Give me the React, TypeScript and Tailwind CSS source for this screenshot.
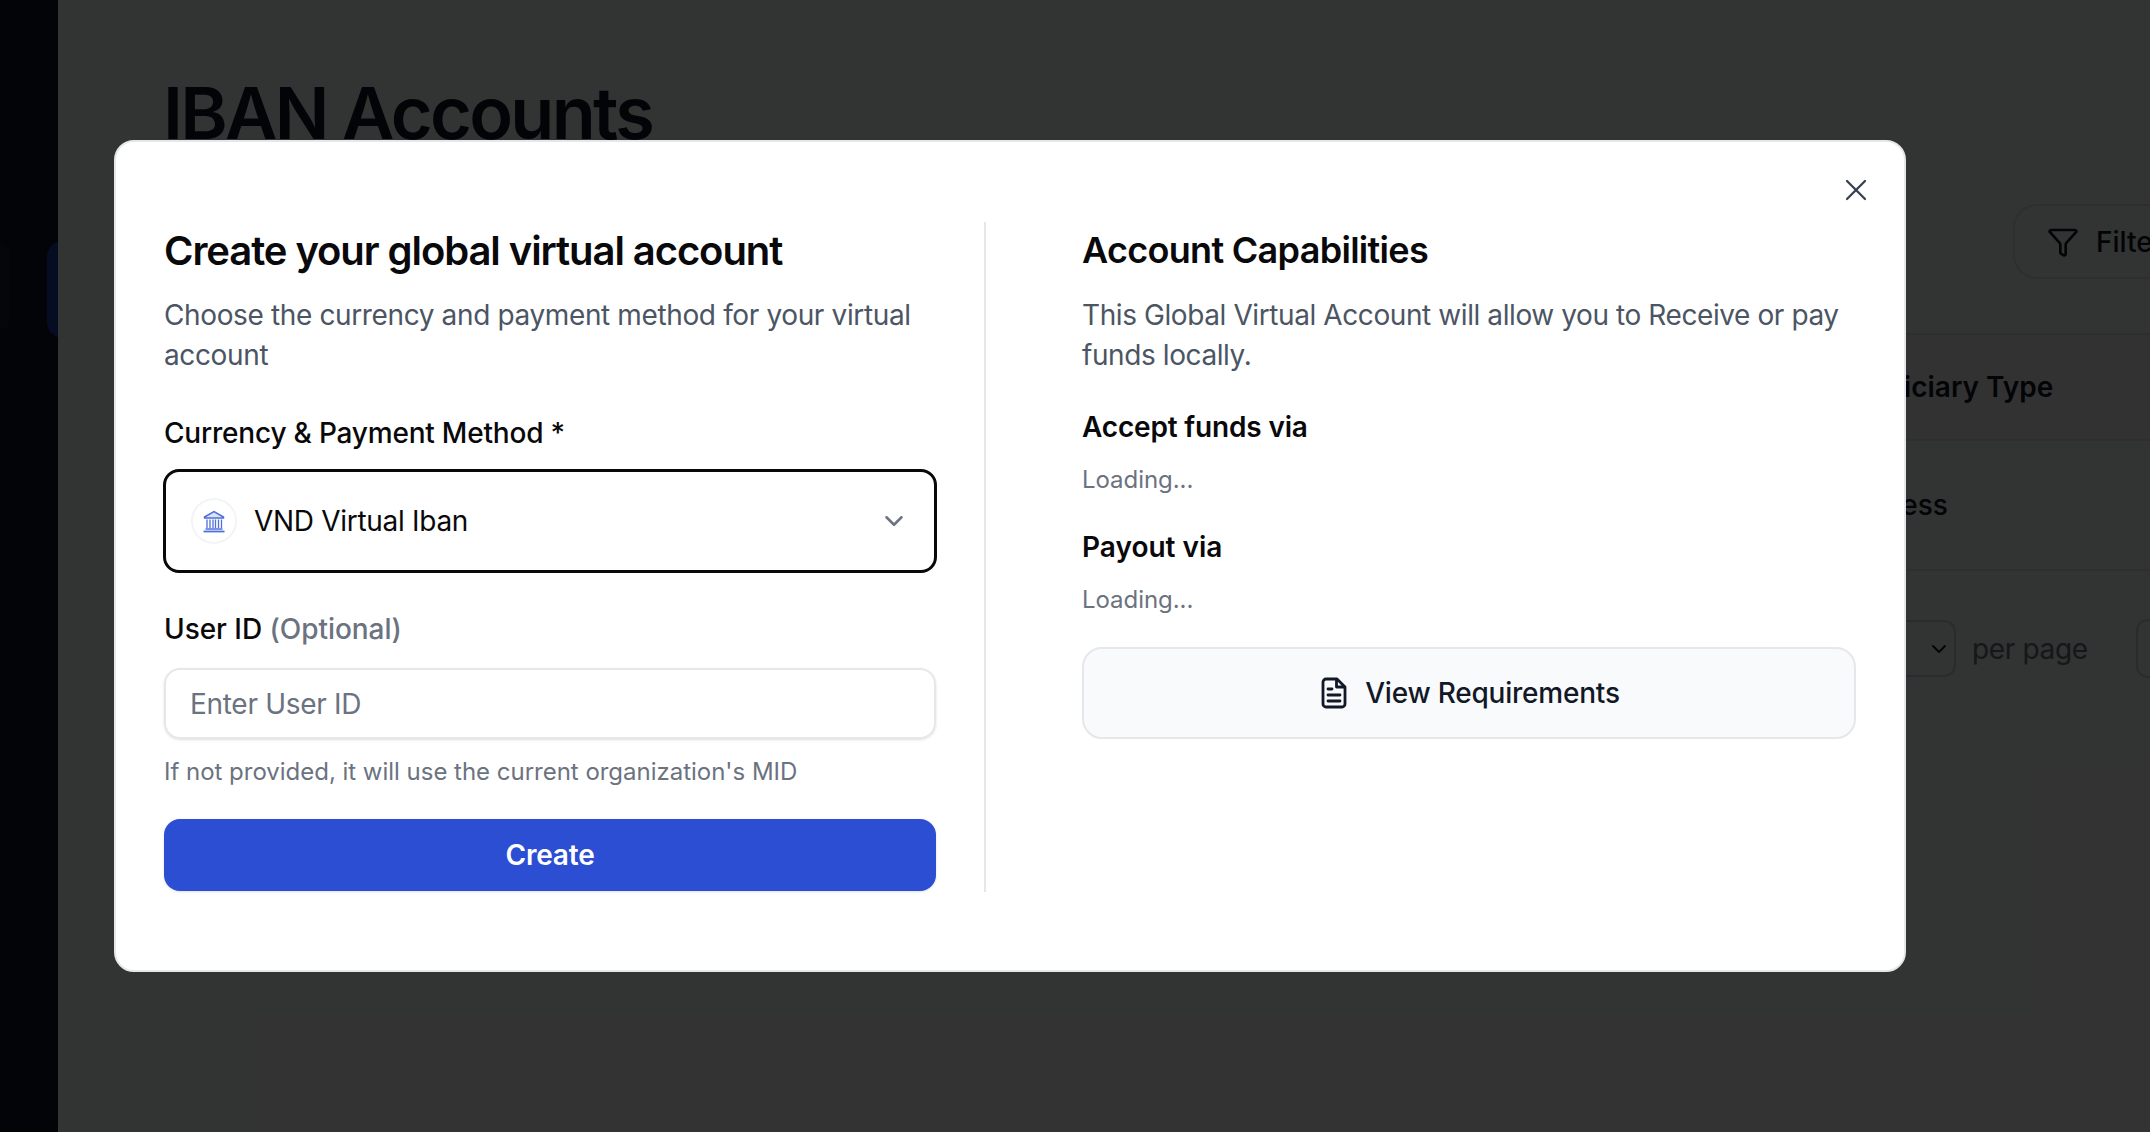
import { ChevronDown, Filter, X } from "lucide-react";

function BankIcon() {
  return (
    <svg width="24" height="24" viewBox="0 0 24 24" fill="none" stroke="#4f6fdc" strokeWidth="1.5">
      <path d="M2.5 8 12 2.5 21.5 8v1h-19z" fill="#dbe3fb" />
      <path d="M5 10.5v8.5M8 10.5v8.5M11 10.5v8.5M13.5 10.5v8.5M16.5 10.5v8.5M19.5 10.5v8.5" strokeWidth="1.3" />
      <path d="M3.5 20h17" strokeWidth="1.5" />
      <path d="M1.5 22.5h21" strokeWidth="1.8" />
    </svg>
  );
}

function DocIcon() {
  return (
    <svg width="26" height="32" viewBox="0 0 26 32" fill="none" stroke="#111827" strokeWidth="2.8" strokeLinecap="round" strokeLinejoin="round">
      <path d="M5 2h11l8 8v17a3 3 0 0 1-3 3H5a3 3 0 0 1-3-3V5a3 3 0 0 1 3-3z" />
      <path d="M15.5 2.5V10h8" />
      <path d="M7 12h4M7 18h12M7 24h12" />
    </svg>
  );
}

export default function App() {
  return (
    <div className="relative flex h-[1132px] w-[2150px] overflow-hidden bg-[#fafefc] font-['Inter',sans-serif]">
      {/* Page behind the dialog */}
      <aside className="flex h-full w-[58px] shrink-0 items-start overflow-hidden bg-[#0f1729] pt-[241px]">
        <div className="mt-[4px] h-[84px] w-[10px] shrink-0 rounded-r-[16px] bg-[#172033]" />
        <div className="ml-[37px] h-[97px] w-[40px] shrink-0 rounded-[16px] bg-[#1e40af]" />
      </aside>
      <main className="min-w-0 flex-1 overflow-hidden">
        <div className="pl-[105px] pt-[73px]">
          <h1 className="text-[72px] font-semibold leading-[80px] tracking-[-2.7px] text-[#111827]">IBAN Accounts</h1>
        </div>
        <div className="mt-[51px] flex justify-start pl-[1955px]">
          <div className="flex h-[75px] w-[240px] shrink-0 items-center gap-[17px] rounded-[24px] border-2 border-[#e5e7eb] pl-[32px]">
            <Filter size={32} strokeWidth={2} className="text-[#111827]" />
            <span className="text-[28px] font-medium text-[#111827]">Filter</span>
          </div>
        </div>
        <div className="ml-[105px] mt-[54px] flex h-[108px] items-center border-y-2 border-[#e5e7eb] bg-[#f9fafb] pl-[1661px] text-[28px] font-semibold tracking-[0.02px] text-[#111827]">
          Beneficiary Type
        </div>
        <div className="ml-[105px] flex h-[130px] items-center border-b-2 border-[#e5e7eb] pl-[1664px] text-[28px] font-medium text-[#111827]">
          Business
        </div>
        <div className="mt-[48px] flex items-center pl-[1770px]">
          <div className="flex h-[57px] w-[128px] shrink-0 items-center justify-end rounded-[12px] border-2 border-[#d1d5db] pr-[3px]">
            <ChevronDown size={24} strokeWidth={2} className="text-[#111827]" />
          </div>
          <span className="ml-[16px] shrink-0 text-[28px] tracking-[-0.35px] text-[#6b7280]">per page</span>
          <div className="ml-[48px] h-[59px] w-[60px] shrink-0 rounded-[12px] border-2 border-[#d1d5db]" />
        </div>
      </main>

      {/* Overlay */}
      <div className="absolute inset-0 bg-black/80" />

      {/* Dialog */}
      <div className="absolute left-[114px] top-[140px] flex h-[832px] w-[1792px] rounded-[20px] border-2 border-[#e5e7eb] bg-white pl-[48px] pt-[80px]">
        <button className="absolute right-[30px] top-[30px] text-[#374151]">
          <X size={36} strokeWidth={1.5} />
        </button>

        {/* Left column */}
        <div className="flex h-[670px] w-[822px] shrink-0 flex-col border-r-2 border-[#e5e7eb] pr-[48px] pt-[1px]">
          <h2 className="text-[40px] font-semibold leading-[56px] tracking-[-1.08px] text-[#09090b]">
            Create your global virtual account
          </h2>
          <p className="mt-[16px] text-[28px] leading-[40px] tracking-[-0.37px] text-[#4b5563]">
            Choose the currency and payment method for your virtual account
          </p>
          <label className="mt-[38px] text-[28px] font-medium leading-[40px] tracking-[-0.2px] text-[#09090b]">
            Currency &amp; Payment Method *
          </label>
          <div className="-mx-[1px] mt-[16px] flex h-[104px] items-center rounded-[16px] border-[3px] border-[#09090b] pl-[25px] pr-[25px]">
            <div className="flex h-[46px] w-[46px] items-center justify-center rounded-full border-2 border-[#f3f4f6] bg-white">
              <BankIcon />
            </div>
            <span className="ml-[17px] flex-1 text-[28px] tracking-[-0.3px] text-[#09090b]">VND Virtual Iban</span>
            <ChevronDown size={30} strokeWidth={2} className="text-[#6b7280]" />
          </div>
          <label className="mt-[36px] text-[28px] font-medium leading-[40px] tracking-[-0.05px] text-[#09090b]">
            User ID <span className="text-[#6b7280]">(Optional)</span>
          </label>
          <div className="mt-[19px] flex h-[71px] items-center rounded-[16px] border-2 border-[#e5e7eb] pl-[24px] shadow-sm">
            <span className="text-[28px] tracking-[-0.3px] text-[#6b7280]">Enter User ID</span>
          </div>
          <p className="mt-[15px] text-[24px] leading-[36px] tracking-[-0.02px] text-[#6b7280]">
            If not provided, it will use the current organization's MID
          </p>
          <button className="mt-[29px] h-[72px] w-full rounded-[16px] bg-[#2b4ed2] text-[28px] font-semibold tracking-[-0.2px] text-white shadow-sm">
            Create
          </button>
        </div>

        {/* Right column */}
        <div className="ml-[96px] flex w-[774px] shrink-0 flex-col">
          <h2 className="text-[36px] font-semibold leading-[56px] tracking-[-0.7px] text-[#09090b]">
            Account Capabilities
          </h2>
          <p className="mt-[17px] text-[28px] leading-[40px] tracking-[-0.41px] text-[#4b5563]">
            This Global Virtual Account will allow you to Receive or pay funds locally.
          </p>
          <h3 className="mt-[32px] text-[28px] font-semibold leading-[40px] tracking-[-0.17px] text-[#09090b]">Accept funds via</h3>
          <p className="mt-[15px] text-[24px] leading-[36px] tracking-[-0.05px] text-[#6b7280]">Loading...</p>
          <h3 className="mt-[29px] text-[28px] font-semibold leading-[40px] text-[#09090b]">Payout via</h3>
          <p className="mt-[15px] text-[24px] leading-[36px] tracking-[-0.05px] text-[#6b7280]">Loading...</p>
          <button className="mt-[29px] flex h-[92px] w-full items-center justify-center gap-[18px] rounded-[20px] border-2 border-[#e5e7eb] bg-[#f9fafb] pl-[3px] text-[28px] font-medium tracking-[-0.22px] text-[#111827]">
            <DocIcon />
            View Requirements
          </button>
        </div>
      </div>
    </div>
  );
}
